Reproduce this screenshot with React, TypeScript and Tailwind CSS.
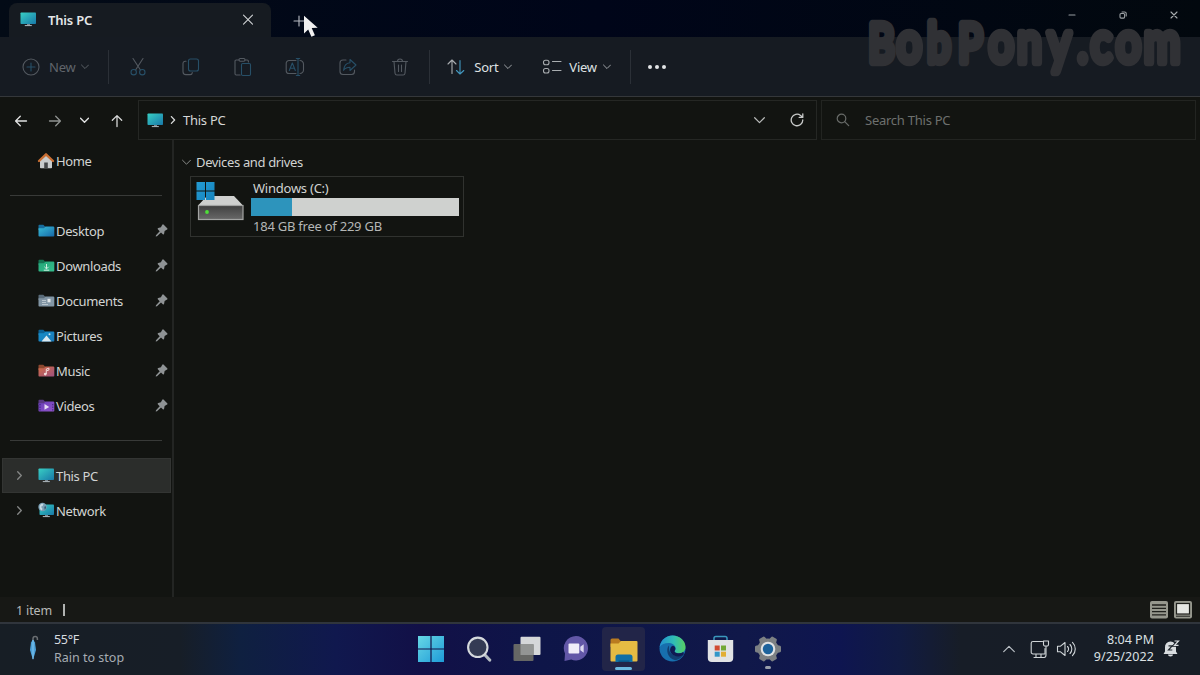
import type { ReactNode } from 'react';

type IconProps = { className?: string };

function Monitor({ className = '' }: IconProps) {
  return (
    <svg className={className} width="17" height="15" viewBox="0 0 17 15">
      <defs>
        <linearGradient id="screen" x1="0" y1="0" x2="1" y2="1">
          <stop offset="0" stopColor="#38cfc4" />
          <stop offset="1" stopColor="#1878a8" />
        </linearGradient>
      </defs>
      <rect x="0.5" y="0.5" width="15.5" height="11.5" rx="0.8" fill="url(#screen)" />
      <rect x="7" y="12" width="3" height="1.6" fill="#7d8890" />
      <rect x="4.8" y="13" width="7" height="1.1" fill="#a4adb2" />
    </svg>
  );
}

function NetworkIcon() {
  return (
    <svg width="17" height="17" viewBox="0 0 17 17">
      <rect x="1.5" y="2.5" width="14.5" height="10.5" rx="0.8" fill="url(#screen)" />
      <rect x="7" y="13" width="3" height="1.6" fill="#7d8890" />
      <rect x="4.8" y="14" width="7" height="1.1" fill="#a4adb2" />
      <circle cx="4.5" cy="5" r="4.2" fill="#789eb4" />
      <path d="M2 3.3c1-1.5 2.6-1.8 3.5-1.2L4.6 4 3 4.8 4.6 7 3.6 8.4C1.8 7.5 1 5 2 3.3Z" fill="#c5d9e2" />
      <path d="M6.3 4.8l1.6-.6c.3 1.5-.2 2.7-1.2 3.5Z" fill="#34566e" />
    </svg>
  );
}

function HomeIcon() {
  return (
    <svg className="-ml-[2px] shrink-0" width="18" height="18" viewBox="0 0 18 18">
      <path d="M3 8 9 3l6 5v7.500a.8.8 0 0 1-.8.8H3.800a.8.800 0 0 1-.8-.8Z" fill="#c9cccd" />
      <path d="M2 9 9 2.300 16 9" fill="none" stroke="#c96f34" strokeWidth="2.400" strokeLinecap="round" strokeLinejoin="round" />
      <rect x="7.200" y="10.500" width="3.600" height="5.800" fill="#46494b" />
    </svg>
  );
}

function Folder({ id, from, to, back, children }: { id: string; from: string; to: string; back: string; children?: ReactNode }) {
  return (
    <svg width="17" height="14" viewBox="0 0 17 14">
      <defs>
        <linearGradient id={id} x1="0" y1="0" x2="1" y2="1">
          <stop offset="0" stopColor={from} />
          <stop offset="1" stopColor={to} />
        </linearGradient>
      </defs>
      <path d="M.5 1.500a.8.8 0 0 1 .8-.8h4l1.700 1.800h8.300a.8.8 0 0 1 .8.8V6H.5Z" fill={back} />
      <path d="M.5 4.300h5.300L7.500 2.800h8a.8.8 0 0 1 .8.8v8.200a.8.8 0 0 1-.8.8H1.300a.8.8 0 0 1-.8-.8Z" fill={`url(#${id})`} />
      {children}
    </svg>
  );
}

function Pin() {
  return (
    <svg width="13" height="13" viewBox="0 0 13 13">
      <path
        d="M7.300.7a.8.8 0 0 1 1.200-.1l3.700 3.700a.8.8 0 0 1-.1 1.200L9.600 7.100l-.5 2.700a.8.8 0 0 1-1.300.4L6 8.500 2 12.200l-1.300.4.3-1.300L4.700 7.200 3 5.400a.8.8 0 0 1 .3-1.300l2.600-.8Z"
        fill="#8f9395"
      />
    </svg>
  );
}

function Chevron({ dir, size = 8, color, width = 1 }: { dir: 'down' | 'right' | 'up'; size?: number; color: string; width?: number }) {
  const d = dir === 'down' ? 'M.6 2.500 5 6.900 9.400 2.500' : dir === 'up' ? 'M.6 7.200 5 2.800 9.400 7.200' : 'M3 .8 7 5 3 9.200';
  return (
    <svg width={size} height={size} viewBox="0 0 10 10">
      <path d={d} fill="none" stroke={color} strokeWidth={(width * 10) / size} strokeLinecap="round" strokeLinejoin="round" />
    </svg>
  );
}

function Line({ children, w = 20, h = 20, color = '#535960' }: { children: ReactNode; w?: number; h?: number; color?: string }) {
  return (
    <svg width={w} height={h} viewBox={`0 0 ${w} ${h}`} fill="none" stroke={color} strokeWidth="1.100" strokeLinecap="round" strokeLinejoin="round">
      {children}
    </svg>
  );
}

function Tool({ children }: { children: ReactNode }) {
  return <button className="flex h-full w-[52.4px] items-center justify-center">{children}</button>;
}

function Divider() {
  return <div className="h-[34px] w-px shrink-0 bg-[#2b3037]" />;
}

function TitleBar() {
  return (
    <header className="flex h-[37px] shrink-0 bg-linear-to-r from-[#030b16] via-[#000519] to-[#02080e]">
      <div className="mt-[3px] ml-[9px] flex h-[34px] w-[262px] items-center rounded-t-lg bg-[#161b21] pl-[11px]">
        <Monitor className="-mt-px" />
        <span className="ml-[11px] flex-1 pt-[2px] text-[13px] font-semibold tracking-[-0.2px] text-[#e4e6e8]">This PC</span>
        <button className="mr-[17px]">
          <Line w={12} h={12} color="#cfd2d4"><path d="m1.500 1.200 9 9m0-9-9 9" /></Line>
        </button>
      </div>
      <button className="ml-[22px] flex h-[41px] w-3 items-center">
        <Line w={12} h={12} color="#b8bcc4"><path d="M6 1v10M1 6h10" /></Line>
      </button>
      <div className="mr-[1px] ml-auto flex h-[30px] items-center">
        <button className="flex w-[50.700px] justify-center"><Line w={8} h={8} color="#989da2"><path d="M1 4h6" /></Line></button>
        <button className="flex w-[50.700px] justify-center">
          <Line w={8} h={8} color="#9ba0a4"><rect x="1" y="2.500" width="4.600" height="4.600" rx="1" /><path d="M3 1h2.600A1.600 1.600 0 0 1 7.200 2.600V5" /></Line>
        </button>
        <button className="flex w-[50.700px] justify-center"><Line w={8} h={8} color="#a9adb0"><path d="m1 1 6 6m0-6-6 6" /></Line></button>
      </div>
    </header>
  );
}

function Toolbar() {
  const blue = '#274f67';
  return (
    <div className="flex h-[60px] shrink-0 items-center border-b border-[#34373a] bg-[#161b22] pt-px text-[13px] tracking-[-0.25px]">
      <button className="flex w-[108px] items-center pl-[22px] text-[#60656b]">
        <Line w={18} h={18}><circle cx="9" cy="9" r="8" /><path d="M9 5v8M5 9h8" stroke={blue} /></Line>
        <span className="mr-[6px] ml-[9px] pt-px">New</span>
        <Chevron dir="down" color="#5b6167" />
      </button>
      <Divider />
      <div className="ml-[3px] flex h-full">
        <Tool>
          <Line><path d="m5 1.500 7.300 11.300M15 1.500 7.700 12.800" /><circle cx="5.700" cy="15.200" r="2.700" stroke={blue} /><circle cx="14.300" cy="15.200" r="2.700" stroke={blue} /></Line>
        </Tool>
        <Tool>
          <Line><path d="M5 4.200H4.200A2.200 2.200 0 0 0 2 6.400v8.400A2.800 2.800 0 0 0 4.800 17.600H9a2.200 2.200 0 0 0 2.300-2" /><rect x="7.500" y="2" width="10" height="12" rx="2" stroke={blue} /></Line>
        </Tool>
        <Tool>
          <Line><path d="M6 3H3.200C2.500 3 2 3.500 2 4.200v12.600c0 .7.500 1.200 1.200 1.200h4M12 3h2.200c.7 0 1.200.500 1.200 1.200V5" /><rect x="6" y="1.500" width="6" height="2.700" rx="1.200" /><rect x="8.500" y="6.500" width="9" height="12" rx="1.200" stroke={blue} /></Line>
        </Tool>
        <Tool>
          <Line><path d="M11 3.500H4a2.800 2.800 0 0 0-2.800 2.800v7.400A2.800 2.800 0 0 0 4 16.500h7M15 3.500a3.500 3.500 0 0 1 3.500 3.500v6a3.500 3.500 0 0 1-3.500 3.500" /><path d="m4.300 13.500 3-7.500 3 7.500M5.300 11.200h4M13 1.500v17M11.300 1.500h3.400M11.300 18.500h3.400" stroke={blue} /></Line>
        </Tool>
        <Tool>
          <Line><path d="M8 3H5a3 3 0 0 0-3 3v8.500a3 3 0 0 0 3 3h8.500a3 3 0 0 0 3-3V13" /><path d="M12 2.500 18 8l-6 5.500v-3.200c-3 0-4.800.8-6.400 3C6 9 8 6 12 5.700Z" stroke={blue} /></Line>
        </Tool>
        <Tool>
          <Line><path d="M2.500 4.500h15M4 4.500l1 11.700A2 2 0 0 0 7 18h6a2 2 0 0 0 2-1.800l1-11.700M7.500 4.500a2.500 2.500 0 0 1 5 0M8.500 8v6.500M11.500 8v6.500" /></Line>
        </Tool>
      </div>
      <div className="ml-[3px]"><Divider /></div>
      <button className="ml-[16px] flex w-[96px] items-center text-[#dfe1e2]">
        <Line w={20} h={18} color="#a9adb0"><path d="M6 15.500V2M2 6l4-4 4 4" /><path d="M14 2.500V16M10.500 12.500 14 16l3.800-3.500" stroke="#4398bf" /></Line>
        <span className="mr-[6px] ml-[8px] pt-px">Sort</span>
        <Chevron dir="down" color="#a0a4a8" />
      </button>
      <button className="flex w-[104px] items-center text-[#dfe1e2]">
        <Line w={20} h={18} color="#a9adb0"><rect x="1.500" y="2.200" width="5.500" height="4.500" rx="2" /><rect x="1.500" y="10.500" width="5.500" height="4.500" rx="2" /><path d="M10.500 3.500H19M10.500 12.500H19" /></Line>
        <span className="mr-[6px] ml-[7px] pt-px">View</span>
        <Chevron dir="down" color="#a0a4a8" />
      </button>
      <div className="-ml-[16px]"><Divider /></div>
      <button className="ml-[17px] flex gap-[3px]">
        <i className="size-1 rounded-full bg-[#e2e4e6]" />
        <i className="size-1 rounded-full bg-[#e2e4e6]" />
        <i className="size-1 rounded-full bg-[#e2e4e6]" />
      </button>
    </div>
  );
}

function Arrow({ turn, color }: { turn: string; color: string }) {
  return (
    <svg className={turn} width="14" height="14" viewBox="0 0 14 14" fill="none" stroke={color} strokeWidth="1.300" strokeLinecap="round" strokeLinejoin="round">
      <path d="M12.500 7H1.800M6.300 2.300 1.600 7l4.700 4.700" />
    </svg>
  );
}

function AddressBar() {
  return (
    <div className="flex h-[43px] shrink-0 bg-[#121411] pt-[3px] text-[13px] tracking-[-0.25px]">
      <nav className="flex h-10 w-[138px] shrink-0 items-center pt-px pl-[14px]">
        <Arrow turn="" color="#e1e2e2" />
        <span className="ml-[20px]"><Arrow turn="rotate-180" color="#909391" /></span>
        <span className="ml-[18px] flex"><Chevron dir="down" size={9} color="#e1e2e2" width={1.400} /></span>
        <span className="ml-[21px]"><Arrow turn="rotate-90" color="#d8d9d9" /></span>
      </nav>
      <div className="flex h-10 w-[679px] items-center border border-[#252724] pl-[8px]">
        <Monitor />
        <span className="ml-[5px] flex"><Chevron dir="right" size={8} color="#d8dad9" width={1.300} /></span>
        <span className="ml-[6px] flex-1 pt-[2px] text-[#d5d7d6]">This PC</span>
        <Chevron dir="down" size={11} color="#b9bbba" width={1.200} />
        <svg className="mr-[12px] ml-[25px]" width="14" height="14" viewBox="0 0 14 14" fill="none" stroke="#c8cac9" strokeWidth="1.300" strokeLinecap="round" strokeLinejoin="round">
          <path d="M12.800 7A5.800 5.800 0 1 1 10.600 2.400L12.500 4M12.800.8v3.600H9.200" />
        </svg>
      </div>
      <div className="ml-[4px] flex h-10 w-[375px] items-center border border-[#222421] pl-[14px]">
        <svg width="14" height="14" viewBox="0 0 14 14" fill="none" stroke="#686b69" strokeWidth="1.200" strokeLinecap="round"><circle cx="5.500" cy="5.500" r="4.300" /><path d="m8.700 8.700 4 4" /></svg>
        <span className="ml-[15px] pt-[2px] text-[#6d706e]">Search This PC</span>
      </div>
    </div>
  );
}

function NavRow({ icon, label, pinned, expandable, active }: { icon: ReactNode; label: string; pinned?: boolean; expandable?: boolean; active?: boolean }) {
  return (
    <div className={active ? 'mr-[1px] ml-[2px] flex h-[35px] items-center border border-[#333533] bg-[#2b2d2b]' : 'mr-[3px] ml-[3px] flex h-[35px] items-center'}>
      <span className="flex w-[34px] pl-[12px]">{expandable && <Chevron dir="right" size={9} color="#858786" width={1.300} />}</span>
      <span className="flex w-[19px] justify-center">{icon}</span>
      <span className="flex-1 pt-[2px] text-[#d2d4d3]">{label}</span>
      {pinned && <span className="mr-[1px]"><Pin /></span>}
    </div>
  );
}

function NavSeparator() {
  return (
    <div className="flex h-[35px] items-center pr-[10px] pl-[10px]"><div className="h-px w-full bg-[#383a38]" /></div>
  );
}

function Sidebar() {
  return (
    <aside className="w-[174px] shrink-0 border-r-2 border-[#232523] pt-[3px] text-[13px] tracking-[-0.35px]">
      <NavRow icon={<HomeIcon />} label="Home" />
      <NavSeparator />
      <NavRow pinned label="Desktop" icon={<Folder id="desktop" from="#38bdd6" to="#1667a8" back="#176c9c" />} />
      <NavRow pinned label="Downloads" icon={<Folder id="downloads" from="#24a779" to="#35bd8c" back="#147352"><path d="M8.500 5v4.800M6.400 7.800l2.100 2.100 2.100-2.100M5.800 11.200h5.400" stroke="#d1eee2" strokeWidth="1" fill="none" /></Folder>} />
      <NavRow pinned label="Documents" icon={<Folder id="documents" from="#7f92a1" to="#8499a8" back="#596b79"><path d="M4 6.500h4M4 8.500h4M4 10.500h6" stroke="#c7d1d7" strokeWidth=".8" /><rect x="9.500" y="4.800" width="3" height="3.500" fill="#e1e6e8" /></Folder>} />
      <NavRow pinned label="Pictures" icon={<Folder id="pictures" from="#168ec9" to="#1b79b7" back="#0c6194"><path d="m3.500 12.500 5-6 5 6Z" fill="#dbeaf1" /><circle cx="11.500" cy="5.200" r="1" fill="#c4e2f0" /></Folder>} />
      <NavRow pinned label="Music" icon={<Folder id="music" from="#d06c45" to="#9d5080" back="#8c482f"><path d="M8.300 10V5l2.600-.8v1.800l-2.100.8" stroke="#f1dbd9" strokeWidth="1" fill="none" /><circle cx="7.300" cy="10.100" r="1.400" fill="#f1dbd9" /></Folder>} />
      <NavRow pinned label="Videos" icon={<Folder id="videos" from="#6a3fba" to="#9054c9" back="#593884"><path d="M2 5v7M14.800 5v7" stroke="#392174" strokeWidth="1" strokeDasharray="1.300 1.300" /><path d="m6.500 5 4.700 2.900-4.700 2.900Z" fill="#e8ddf4" /></Folder>} />
      <NavSeparator />
      <NavRow expandable active label="This PC" icon={<Monitor />} />
      <NavRow expandable label="Network" icon={<NetworkIcon />} />
    </aside>
  );
}

function DriveIcon() {
  return (
    <svg className="shrink-0" width="48" height="42" viewBox="0 0 48 42">
      <defs>
        <linearGradient id="body" x1="0" y1="0" x2="0" y2="1"><stop offset="0" stopColor="#404040" /><stop offset="1" stopColor="#686868" /></linearGradient>
        <linearGradient id="flag" x1="0" y1="0" x2="1" y2="1"><stop offset="0" stopColor="#249bd3" /><stop offset="1" stopColor="#1583bd" /></linearGradient>
      </defs>
      <path d="M11 15h27l9 9.500H2Z" fill="#cfd0cf" />
      <rect x="2.500" y="24.500" width="44.500" height="14" fill="url(#body)" stroke="#a3a4a3" strokeWidth="1.200" />
      <circle cx="11" cy="31" r="1.900" fill="#4de038" />
      <path d="M0.500 1h8.500v8.500H.5ZM10 1h8.500v8.500H10ZM.5 10.500H9V19H.5ZM10 10.500h8.500V19H10Z" fill="url(#flag)" />
    </svg>
  );
}

function Content() {
  const used = 45 / 229;
  return (
    <main className="flex-1 pt-[12px] pl-[8px] text-[13px] text-[#d1d3d2]">
      <div className="flex h-5 items-center">
        <Chevron dir="down" size={9} color="#898b89" />
        <h2 className="ml-[5px] pt-[2px] tracking-[-0.35px]">Devices and drives</h2>
      </div>
      <section className="mt-[4px] ml-[8px] flex h-[61px] w-[274px] border border-[#30322f] pt-[4px] pl-[5px]">
        <DriveIcon />
        <div className="ml-[7px] w-[208px] tracking-[-0.24px]">
          <p className="h-[16px] pl-[2px] leading-[15px]">Windows (C:)</p>
          <div className="mt-px h-[18px] w-full bg-[#cfd1cf]"><div className="h-full bg-[#2d94bc]" style={{ width: `${used * 100}%` }} /></div>
          <p className="h-[16px] pl-[2px] leading-[20px] text-[#b5b7b6]">184 GB free of 229 GB</p>
        </div>
      </section>
    </main>
  );
}

function StatusBar() {
  return (
    <footer className="flex h-[25px] shrink-0 items-center bg-[#171815] pr-[8px] pl-[16px] text-[12.500px] tracking-[-0.15px] text-[#b8bab8]">
      <span className="pt-[3px]">1 item</span>
      <span className="mt-px ml-[11px] h-[12px] w-[2px] bg-[#b0b2b0]" />
      <svg className="mt-px ml-auto" width="18" height="18" viewBox="0 0 18 18"><rect width="18" height="17.500" rx="2" fill="#96978d" /><path d="M2 4h14M2 7.300h14M2 10.600h14M2 13.900h14" stroke="#20211d" strokeWidth="1.300" /></svg>
      <svg className="mt-px ml-[6px]" width="18" height="18" viewBox="0 0 18 18"><rect width="18" height="17.500" rx="2" fill="#96978d" /><rect x="2.500" y="2.500" width="13" height="10.500" fill="#e6e7e3" stroke="#20211d" strokeWidth="1.200" /><path d="M2 15.200h14" stroke="#20211d" /></svg>
    </footer>
  );
}

function TaskIcon({ children }: { children: ReactNode }) {
  return <button className="flex h-full w-[48.200px] items-center justify-center">{children}</button>;
}

function Gear() {
  return (
    <svg width="28" height="28" viewBox="0 0 28 28">
      <g fill="#7c8083">
        <circle cx="14" cy="14" r="10.500" />
        {[0, 60, 120, 180, 240, 300].map((a) => (
          <path key={a} d="M9.500 7 10.800 1.900a1.200 1.200 0 0 1 1.200-.9h4a1.200 1.200 0 0 1 1.200.9L18.500 7Z" transform={`rotate(${a + 30} 14 14)`} />
        ))}
      </g>
      <circle cx="14" cy="14" r="7.300" fill="#dfe2e4" />
      <circle cx="14" cy="14" r="5.200" fill="#1d639c" />
    </svg>
  );
}

function Taskbar() {
  return (
    <div className="flex h-[53px] shrink-0 border-t-2 border-[#30353c] bg-[linear-gradient(90deg,#171e25_0%,#171e27_15%,#0f2040_20%,#10184e_28%,#121047_35%,#0e1548_45%,#101849_62%,#0e1550_70%,#111b42_75%,#171d27_80%,#171d25_100%)] pb-[2px] text-[12.500px]">
      <div className="flex w-[407px] items-center pl-[26px]">
        <svg width="14" height="28" viewBox="0 0 14 28">
          <path d="M7 6V3.800a2.200 2.200 0 0 1 4.400 0V5" fill="none" stroke="#6a6e72" strokeWidth="1.500" />
          <path d="M7 4.500 9 7.500 10 15 7 25 4 15 5 7.500Z" fill="#4ba0d8" />
          <path d="M7 5v19" stroke="#83c6ef" />
        </svg>
        <div className="ml-[14px] leading-[17.500px]">
          <p className="tracking-[-0.3px] text-[#d9dde0]">55°F</p>
          <p className="text-[#a6acb2]">Rain to stop</p>
        </div>
      </div>
      <div className="flex">
        <TaskIcon>
          <svg width="26" height="26" viewBox="0 0 26 26"><defs><linearGradient id="start" x1="0" y1="0" x2="1" y2="1"><stop offset="0" stopColor="#67d7e5" /><stop offset="1" stopColor="#1e9bd8" /></linearGradient></defs><path d="M0 0h12.400v12.400H0ZM13.600 0H26v12.400H13.600ZM0 13.600h12.400V26H0ZM13.600 13.600H26V26H13.600Z" fill="url(#start)" /></svg>
        </TaskIcon>
        <TaskIcon>
          <svg width="26" height="26" viewBox="0 0 26 26"><path d="m18.500 18.500 5.200 5.500" stroke="#b4bbc2" strokeWidth="3.200" strokeLinecap="round" /><circle cx="11.800" cy="11.300" r="9.700" fill="#343b54" stroke="#d5d9dd" strokeWidth="2.100" /></svg>
        </TaskIcon>
        <TaskIcon>
          <svg width="28" height="26" viewBox="0 0 28 26"><rect x="7.500" y=".8" width="20" height="18.200" rx="1" fill="#d5d7d9" /><rect x=".5" y="8" width="20" height="17" rx="1" fill="#666765" /><rect x="7.500" y="8" width="13" height="11" fill="#939594" /></svg>
        </TaskIcon>
        <TaskIcon>
          <svg width="26" height="27" viewBox="0 0 26 27"><path d="M13 1a12.200 12.200 0 1 1-4.800 23.500L1.500 26 2 18.500A12.200 12.200 0 0 1 13 1Z" fill="#6257a7" /><rect x="5.500" y="8.500" width="10.800" height="10" rx="1" fill="#f0edf8" /><path d="m17.300 11.800 3.400-2.600v8.600l-3.400-2.600Z" fill="#dcd8f1" /></svg>
        </TaskIcon>
        <TaskIcon>
          <div className="flex h-[44px] w-[43px] flex-col items-center rounded-[4px] bg-[#222548] pt-[11px]">
            <svg width="28" height="25" viewBox="0 0 28 25"><path d="M.5 2A1.500 1.500 0 0 1 2 .5h6.500L11 3.500V9H.5Z" fill="#b97b20" /><path d="M.5 5.500h8L11 3h15.500a1 1 0 0 1 1 1v18.500a1 1 0 0 1-1 1h-25a1 1 0 0 1-1-1Z" fill="#e5bb43" /><path d="M5.500 24v-5a2.500 2.500 0 0 1 2.500-2.500h12a2.500 2.500 0 0 1 2.500 2.500v5Z" fill="#0f6fa6" /><path d="M8.500 24v-1.500h11V24Z" fill="#095687" /></svg>
            <i className="mt-[4px] h-[3px] w-[17px] rounded-full bg-[#6bb8df]" />
          </div>
        </TaskIcon>
        <TaskIcon>
          <svg width="27" height="27" viewBox="0 0 27 27">
            <defs>
              <linearGradient id="edgeTop" x1="0" y1=".5" x2="1" y2=".5"><stop offset="0" stopColor="#228fd0" /><stop offset=".55" stopColor="#30bdb5" /><stop offset="1" stopColor="#57cf61" /></linearGradient>
            </defs>
            <circle cx="13.500" cy="13.500" r="13" fill="#176fae" />
            <path d="M.6 12C2 4.500 7.500.5 13.500.5c7.500 0 13 5.300 13 11.500 0 4-3 6.300-6.500 6.300-3.300 0-5-1.400-4.200-2.600.9-1.200 1-2 .8-3C16 9.800 13 8 9.500 8 5.500 8 2.500 9.500.6 12Z" fill="url(#edgeTop)" />
            <path d="M10 10.500c-3.500 3.500-2 13 6.500 14.800 4-.8 7-3.500 8-5.500-5.500 3-14 .8-14.500-6Z" fill="#123f72" />
            <path d="M15.800 15.700c-.8 1.200.9 2.600 4.200 2.600 1.500 0 3-.4 4.200-1.200.8.900.7 2 .3 2.700-3.500 2.700-10 2-12.500-1.800-1.700-2.800-.8-6.500 1.800-7.300 2 .2 3.500 2.500 2 5Z" fill="#101b52" />
          </svg>
        </TaskIcon>
        <TaskIcon>
          <svg width="27" height="28" viewBox="0 0 27 28"><path d="M7 6V3.300A1.800 1.800 0 0 1 8.800 1.500h9.400A1.800 1.800 0 0 1 20 3.300V6" fill="none" stroke="#3a98bd" strokeWidth="1.500" /><path d="M.8 5h25.400v18a4 4 0 0 1-4 4H4.800a4 4 0 0 1-4-4Z" fill="#e1e3e5" /><path d="M7.700 10.500h5v5h-5Z" fill="#d04b32" /><path d="M14 10.500h5v5h-5Z" fill="#72a936" /><path d="M7.700 16.700h5v5h-5Z" fill="#3197c8" /><path d="M14 16.700h5v5h-5Z" fill="#e2ae34" /></svg>
        </TaskIcon>
        <TaskIcon>
          <span className="flex flex-col items-center pt-[7px]"><Gear /><i className="mt-[3px] h-[3px] w-[6px] rounded-full bg-[#989daa]" /></span>
        </TaskIcon>
      </div>
      <div className="ml-auto flex items-center pt-px text-[#dce0e3]">
        <Chevron dir="up" size={12} color="#b9bfc4" width={1.200} />
        <span className="ml-[15px]">
          <Line w={20} h={20} color="#d0d5d8"><path d="M12.500 2.500H3A1.800 1.800 0 0 0 1.200 4.300v8.900A1.800 1.800 0 0 0 3 15h12V9.500M6 15v3M11 15v3M4 18.500h10" /><path d="M13.500 2h5v3.500a1.500 1.500 0 0 1-1.500 1.500h-2a1.500 1.500 0 0 1-1.500-1.500ZM16 7v9c0 1.500-1 2.500-2 2.500" /></Line>
        </span>
        <span className="ml-[6px]">
          <Line w={20} h={18} color="#d0d5d8"><path d="M1.500 6.200h3L9 2.500v13l-4.500-3.700h-3Z" /><path d="M11.500 6.500a3.500 3.500 0 0 1 0 5M14 4.500a6.500 6.500 0 0 1 0 9M16.500 2.300a9.500 9.500 0 0 1 0 13.400" /></Line>
        </span>
        <div className="-mt-[2px] ml-[16px] w-[62px] text-right leading-[17.500px] whitespace-nowrap"><p>8:04 PM</p><p className="tracking-[0.1px]">9/25/2022</p></div>
        <svg className="-mt-[2px] mr-[20px] ml-[9px]" width="17" height="18" viewBox="0 0 17 18">
          <path d="M2 12.500V8.500A5.400 5.400 0 0 1 7.500 2.500 5.400 5.400 0 0 1 13 8.500v4l1.500 2.500H.5Z" fill="#d8dcdf" />
          <path d="M5 15.500h5a2.500 2 0 0 1-5 0Z" fill="#d8dcdf" />
          <path d="M5.500 6.800h3.600L5.500 11h3.800" fill="none" stroke="#242b32" strokeWidth="1.200" />
          <path d="M11.500 2h4l-4 4.300h4" fill="none" stroke="#171d25" strokeWidth="3" /><path d="M11.500 2h4l-4 4.300h4" fill="none" stroke="#d8dcdf" strokeWidth="1.200" />
        </svg>
      </div>
    </div>
  );
}

export default function App() {
  return (
    <div className="relative flex h-[675px] w-[1200px] flex-col overflow-hidden bg-[#121411] font-['Noto_Sans','Open_Sans',sans-serif]">
      <TitleBar />
      <Toolbar />
      <AddressBar />
      <div className="flex min-h-0 flex-1"><Sidebar /><Content /></div>
      <StatusBar />
      <Taskbar />
      <svg className="pointer-events-none absolute top-0 left-[862px]" width="330" height="100" viewBox="0 0 330 100">
        <g transform="scale(.77 1)" fill="#303135" stroke="#303135" strokeWidth="8.500" strokeLinejoin="round" strokeLinecap="round">
          <text y="62" x="8.500 45.200 84.700 125 164.700 201.500 241.500 280 297 329.800 366.300" style={{ fontFamily: 'Lato, sans-serif', fontWeight: 400, fontSize: 57 }}>
            <tspan fontSize="52">B</tspan>o<tspan fontSize="54">b</tspan><tspan fontSize="52">P</tspan>ony.com
          </text>
        </g>
      </svg>
      <svg className="pointer-events-none absolute top-[15px] left-[303px]" width="16" height="23" viewBox="0 0 16 23">
        <path d="M1 .8v17.700l4.200-4 3.200 7.300 3.500-1.500-3.200-7.200 6-.3Z" fill="#f0f0f0" />
      </svg>
    </div>
  );
}
